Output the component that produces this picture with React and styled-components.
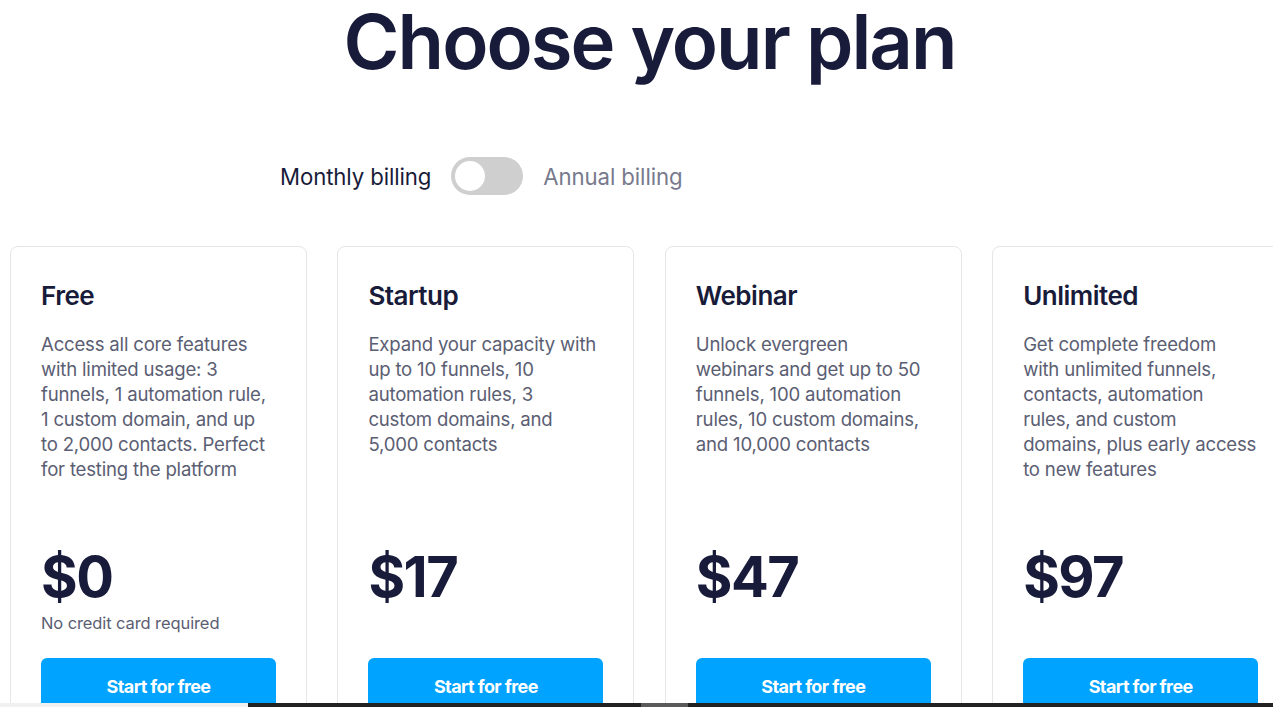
import React, { useState } from "react";
import styled, { createGlobalStyle } from "styled-components";

const Global = createGlobalStyle`
  html, body { margin: 0; padding: 0; background: #fff; overflow: hidden; }
  body { font-family: "Inter", "Lato", "Noto Sans", sans-serif; color: #181b39; }
  * { box-sizing: border-box; }
`;

const Page = styled.div`
  width: 1273px;
  height: 707px;
  position: relative;
  overflow: hidden;
`;

const Title = styled.h1`
  margin: 0;
  padding-left: 26px;
  text-align: center;
  font-size: 76px;
  line-height: 82px;
  font-weight: 600;
  letter-spacing: -2px;
  color: #181b39;
`;

const BillingRow = styled.div`
  display: flex;
  align-items: center;
  gap: 20px;
  margin-top: 74px;
  height: 40px;
  padding-left: 280px;
`;

const BillingLabel = styled.span`
  font-size: 22.2px;
  letter-spacing: -0.1px;
  color: ${(p) => (p.$active ? "#181b39" : "#777a8c")};
`;

const Switch = styled.button`
  width: 72px;
  height: 38px;
  border-radius: 19px;
  border: none;
  background: #cfcfcf;
  padding: 4px;
  display: flex;
  justify-content: ${(p) => (p.$on ? "flex-end" : "flex-start")};
  cursor: pointer;
`;

const Knob = styled.span`
  width: 30px;
  height: 30px;
  border-radius: 50%;
  background: #fff;
`;

const Cards = styled.div`
  display: flex;
  gap: 30.4px;
  margin-top: 50px;
  padding-left: 10px;
`;

const Card = styled.div`
  flex: 0 0 297px;
  height: 480px;
  border: 1px solid #e6e6e6;
  border-radius: 8px;
  padding: 32px 30px 0 30px;
  display: flex;
  flex-direction: column;
`;

const PlanName = styled.h2`
  margin: 0;
  font-size: 26px;
  line-height: 34px;
  font-weight: 600;
  letter-spacing: -0.5px;
  color: #181b39;
`;

const Description = styled.p`
  margin: 19px 0 0 0;
  height: 213px;
  font-size: 18.6px;
  line-height: 25px;
  color: #5b5e73;
  letter-spacing: -0.2px;
`;

const Line = styled.span`
  display: block;
  white-space: nowrap;
`;

const Price = styled.div`
  font-size: 56px;
  line-height: 64px;
  font-weight: 700;
  letter-spacing: -1.5px;
  color: #181b39;
`;

const Note = styled.div`
  height: 49px;
  font-size: 16.5px;
  line-height: 24px;
  padding-top: 2px;
  color: #5b5e73;
  letter-spacing: -0.1px;
`;

const CTA = styled.button`
  width: 235px;
  height: 56px;
  border: none;
  border-radius: 6px;
  background: #00a3ff;
  color: #fff;
  font-family: inherit;
  font-size: 18px;
  font-weight: 700;
  letter-spacing: -0.6px;
  cursor: pointer;
`;

const BottomBar = styled.div`
  position: absolute;
  left: 0;
  right: 0;
  bottom: 0;
  height: 4px;
  display: flex;
`;

const BarSeg = styled.div`
  width: ${(p) => p.$w};
  flex: ${(p) => (p.$grow ? 1 : "none")};
  background: ${(p) => p.$c};
`;

const plans = [
  {
    name: "Free",
    lines: [
      "Access all core features",
      "with limited usage: 3",
      "funnels, 1 automation rule,",
      "1 custom domain, and up",
      "to 2,000 contacts. Perfect",
      "for testing the platform",
    ],
    price: "$0",
    note: "No credit card required",
  },
  {
    name: "Startup",
    lines: [
      "Expand your capacity with",
      "up to 10 funnels, 10",
      "automation rules, 3",
      "custom domains, and",
      "5,000 contacts",
    ],
    price: "$17",
  },
  {
    name: "Webinar",
    lines: [
      "Unlock evergreen",
      "webinars and get up to 50",
      "funnels, 100 automation",
      "rules, 10 custom domains,",
      "and 10,000 contacts",
    ],
    price: "$47",
  },
  {
    name: "Unlimited",
    lines: [
      "Get complete freedom",
      "with unlimited funnels,",
      "contacts, automation",
      "rules, and custom",
      "domains, plus early access",
      "to new features",
    ],
    price: "$97",
  },
];

export default function App() {
  const [annual, setAnnual] = useState(false);
  return (
    <Page>
      <Global />
      <Title>Choose your plan</Title>
      <BillingRow>
        <BillingLabel $active={!annual}>Monthly billing</BillingLabel>
        <Switch $on={annual} onClick={() => setAnnual(!annual)} aria-label="Toggle billing">
          <Knob />
        </Switch>
        <BillingLabel $active={annual}>Annual billing</BillingLabel>
      </BillingRow>
      <Cards>
        {plans.map((p) => (
          <Card key={p.name}>
            <PlanName>{p.name}</PlanName>
            <Description>
              {p.lines.map((l, i) => (
                <Line key={i}>{l}</Line>
              ))}
            </Description>
            <Price>{p.price}</Price>
            <Note>{p.note || ""}</Note>
            <CTA>Start for free</CTA>
          </Card>
        ))}
      </Cards>
      <BottomBar>
        <BarSeg $w="248px" $c="#f1f1f1" />
        <BarSeg $w="393px" $c="#222222" />
        <BarSeg $w="47px" $c="#5a5a5a" />
        <BarSeg $grow $c="#222222" />
      </BottomBar>
    </Page>
  );
}
